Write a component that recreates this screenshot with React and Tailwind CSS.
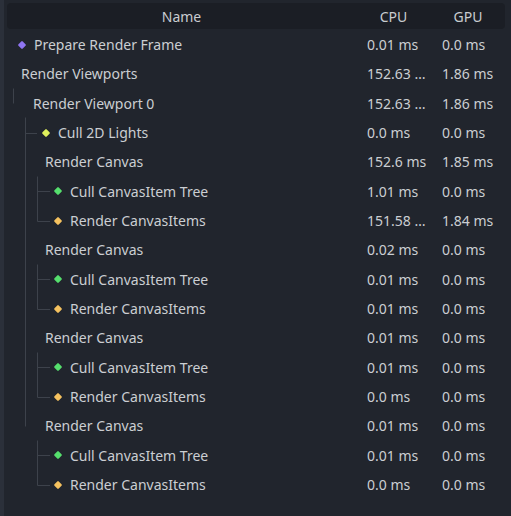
// Godot-style profiler tree: Name / CPU / GPU
const rows = [
  { name: "Prepare Render Frame", level: 0, icon: "#8f75f2", cpu: "0.01 ms", gpu: "0.0 ms" },
  { name: "Render Viewports", level: 0, cpu: "152.63 …", gpu: "1.86 ms" },
  { name: "Render Viewport 0", level: 1, cpu: "152.63 …", gpu: "1.86 ms" },
  { name: "Cull 2D Lights", level: 2, icon: "#dff05c", cpu: "0.0 ms", gpu: "0.0 ms" },
  { name: "Render Canvas", level: 2, cpu: "152.6 ms", gpu: "1.85 ms" },
  { name: "Cull CanvasItem Tree", level: 3, icon: "#55df6d", cpu: "1.01 ms", gpu: "0.0 ms" },
  { name: "Render CanvasItems", level: 3, icon: "#f5c25f", cpu: "151.58 …", gpu: "1.84 ms" },
  { name: "Render Canvas", level: 2, cpu: "0.02 ms", gpu: "0.0 ms" },
  { name: "Cull CanvasItem Tree", level: 3, icon: "#55df6d", cpu: "0.01 ms", gpu: "0.0 ms" },
  { name: "Render CanvasItems", level: 3, icon: "#f5c25f", cpu: "0.01 ms", gpu: "0.0 ms" },
  { name: "Render Canvas", level: 2, cpu: "0.01 ms", gpu: "0.0 ms" },
  { name: "Cull CanvasItem Tree", level: 3, icon: "#55df6d", cpu: "0.01 ms", gpu: "0.0 ms" },
  { name: "Render CanvasItems", level: 3, icon: "#f5c25f", cpu: "0.0 ms", gpu: "0.0 ms" },
  { name: "Render Canvas", level: 2, cpu: "0.01 ms", gpu: "0.0 ms" },
  { name: "Cull CanvasItem Tree", level: 3, icon: "#55df6d", cpu: "0.01 ms", gpu: "0.0 ms" },
  { name: "Render CanvasItems", level: 3, icon: "#f5c25f", cpu: "0.0 ms", gpu: "0.0 ms" },
];

const ROW_H = 29.33;
const TOP = 30;
const mid = (i) => Math.round(TOP + ROW_H * i + ROW_H / 2) + 0.5;

function GuideLines() {
  const stroke = "#3d424b";
  const groups = [4, 7, 10, 13];
  return (
    <svg className="absolute left-0 top-0 pointer-events-none" width="511" height="516">
      <g stroke={stroke} strokeWidth="1" fill="none">
        <line x1="13.5" y1={mid(1) + 14} x2="13.5" y2={mid(2)} />
        <line x1="25.5" y1={mid(2) + 14} x2="25.5" y2={mid(13)} />
        <line x1="25.5" y1={mid(3)} x2="37" y2={mid(3)} />
        {groups.map((g) => (
          <g key={g}>
            <line x1="37.5" y1={mid(g) + 14} x2="37.5" y2={mid(g + 2)} />
            <line x1="37.5" y1={mid(g + 1)} x2="50" y2={mid(g + 1)} />
            <line x1="37.5" y1={mid(g + 2)} x2="50" y2={mid(g + 2)} />
          </g>
        ))}
      </g>
    </svg>
  );
}

function Row({ row }) {
  const pad = row.icon ? 18 + row.level * 12 : 21 + row.level * 12;
  return (
    <div className="flex items-center h-[29.33px]">
      <div className="w-[349px] flex items-center" style={{ paddingLeft: pad - 7 }}>
        {row.icon && (
          <span className="w-[8px] h-[8px] mr-[8px] flex items-center justify-center">
            <span className="block w-[6px] h-[6px] rotate-45 rounded-[1px]" style={{ background: row.icon }} />
          </span>
        )}
        <span className="whitespace-nowrap">{row.name}</span>
      </div>
      <div className="w-[75px] pl-[11px] whitespace-nowrap">{row.cpu}</div>
      <div className="w-[74px] pl-[11px] whitespace-nowrap">{row.gpu}</div>
    </div>
  );
}

export default function App() {
  return (
    <div
      className="relative w-[511px] h-[516px] bg-[#21252d] flex text-[14px] text-[#cbced2] overflow-hidden"
      style={{ fontFamily: '"Noto Sans", "Open Sans", sans-serif' }}
    >
      <div className="w-[4px] h-full bg-[#2b303a]" />
      <div className="flex-1 pl-[3px] pr-[6px] pt-[3px]">
        <div className="flex h-[26px] items-center text-[#c9ccd0] bg-[#1b1e25] rounded-[4px]">
          <div className="w-[349px] h-full flex items-center justify-center">Name</div>
          <div className="w-[75px] h-full flex items-center justify-center">CPU</div>
          <div className="w-[74px] h-full flex items-center justify-center">GPU</div>
        </div>
        <div className="pt-[1px]">
          {rows.map((r, i) => (
            <Row key={i} row={r} />
          ))}
        </div>
      </div>
      <GuideLines />
    </div>
  );
}
